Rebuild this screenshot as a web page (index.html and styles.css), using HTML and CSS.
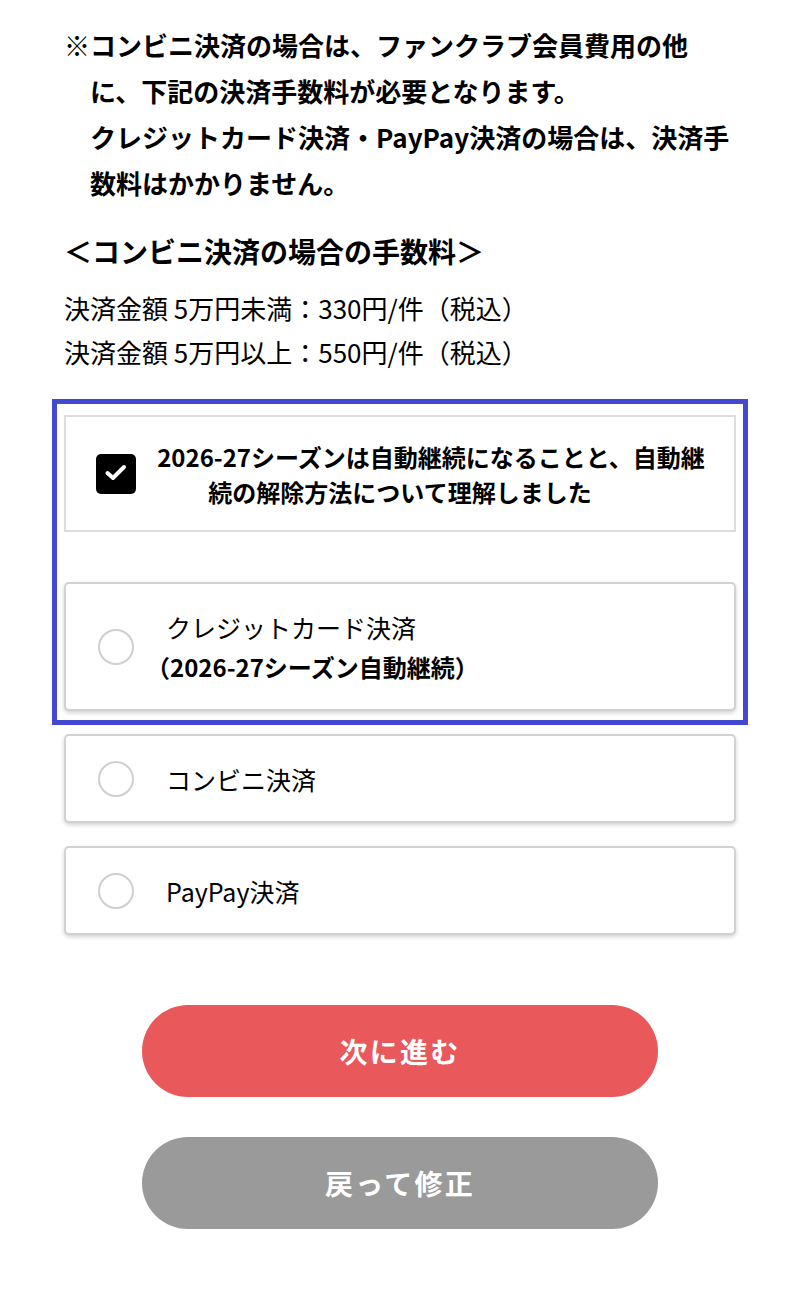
FILE: index.html
```html
<!DOCTYPE html>
<html lang="ja">
<head>
<meta charset="utf-8">
<title>お支払い方法</title>
<link rel="stylesheet" href="styles.css">
</head>
<body>
<main class="page">
  <p class="note">※コンビニ決済の場合は、ファンクラブ会員費用の他に、下記の決済手数料が必要となります。<br>クレジットカード決済・PayPay決済の場合は、決済手数料はかかりません。</p>
  <h2 class="fee-title">＜コンビニ決済の場合の手数料＞</h2>
  <p class="fee">決済金額 5万円未満：330円/件（税込）<br>決済金額 5万円以上：550円/件（税込）</p>

  <div class="highlight">
    <label class="agree">
      <span class="checkbox">
        <svg viewBox="0 0 40 40" width="40" height="40"><path d="M11.5 19 L17 24 L28 13" fill="none" stroke="#fff" stroke-width="4" stroke-linecap="round" stroke-linejoin="round"/></svg>
      </span>
      <span class="agree-text">2026-27シーズンは自動継続になることと、自動継続の解除方法について理解しました</span>
    </label>

    <label class="option option-first">
      <span class="radio"></span>
      <span class="option-text">クレジットカード決済<span class="option-sub">（2026-27シーズン自動継続）</span></span>
    </label>
  </div>

  <label class="option">
    <span class="radio"></span>
    <span class="option-text">コンビニ決済</span>
  </label>

  <label class="option">
    <span class="radio"></span>
    <span class="option-text">PayPay決済</span>
  </label>

  <div class="actions">
    <button class="btn btn-next" type="button">次に進む</button>
    <button class="btn btn-back" type="button">戻って修正</button>
  </div>
</main>
</body>
</html>
```

FILE: styles.css
```css
* { box-sizing: border-box; }

html, body {
  margin: 0;
  padding: 0;
  background: #fff;
}

body {
  font-family: "Noto Sans CJK JP", "Noto Sans", sans-serif;
  color: #000;
}

.page {
  width: 672px;
  margin: 0 auto;
  padding-top: 22px;
  padding-bottom: 40px;
}

.note {
  margin: 0;
  font-size: 26px;
  font-weight: 700;
  line-height: 46px;
  padding-left: 1em;
  text-indent: -1em;
}

.fee-title {
  margin: 22px 0 0;
  font-size: 28px;
  font-weight: 700;
  line-height: 46px;
}

.fee {
  margin: 12px 0 0;
  font-size: 26px;
  font-weight: 400;
  line-height: 44px;
}

.highlight {
  margin: 25px -12px 9px;
  border: 5px solid #4248d0;
  padding: 11px 7px 9px;
}

.agree {
  position: relative;
  display: block;
  border: 2px solid #dddddd;
  padding: 22px 24px 21px;
  text-align: center;
  font-size: 24px;
  font-weight: 700;
  line-height: 35px;
}

.agree-text {
  display: block;
  text-indent: 62px;
}

.checkbox {
  position: absolute;
  left: 30px;
  top: 50%;
  width: 40px;
  height: 40px;
  margin-top: -20px;
  background: #000;
  border-radius: 5px;
}

.checkbox svg { display: block; }

.option {
  display: flex;
  align-items: center;
  gap: 32px;
  border: 2px solid #d2d2d2;
  border-radius: 5px;
  box-shadow: 0 2px 4px rgba(0, 0, 0, 0.18);
  padding: 22.5px 32px;
  margin-bottom: 23px;
  font-size: 25px;
  line-height: 40px;
  background: #fff;
}

.option-first {
  margin-top: 50px;
  margin-bottom: 0;
}

.radio {
  flex: 0 0 36px;
  width: 36px;
  height: 36px;
  border: 2px solid #cfcfcf;
  border-radius: 50%;
  background: #fff;
}

.option-sub {
  display: block;
  margin-left: -20px;
  font-weight: 700;
  font-size: 24px;
}

.actions {
  display: flex;
  flex-direction: column;
  align-items: center;
  gap: 40px;
  margin-top: 70px;
}

.btn {
  width: 516px;
  height: 92px;
  border: none;
  border-radius: 46px;
  color: #fff;
  font-family: "Noto Sans CJK JP", "Noto Sans", sans-serif;
  font-size: 28px;
  font-weight: 700;
  letter-spacing: 0.08em;
  cursor: pointer;
}

.btn-next { background: #e9585a; }
.btn-back { background: #9a9a9a; }
```
